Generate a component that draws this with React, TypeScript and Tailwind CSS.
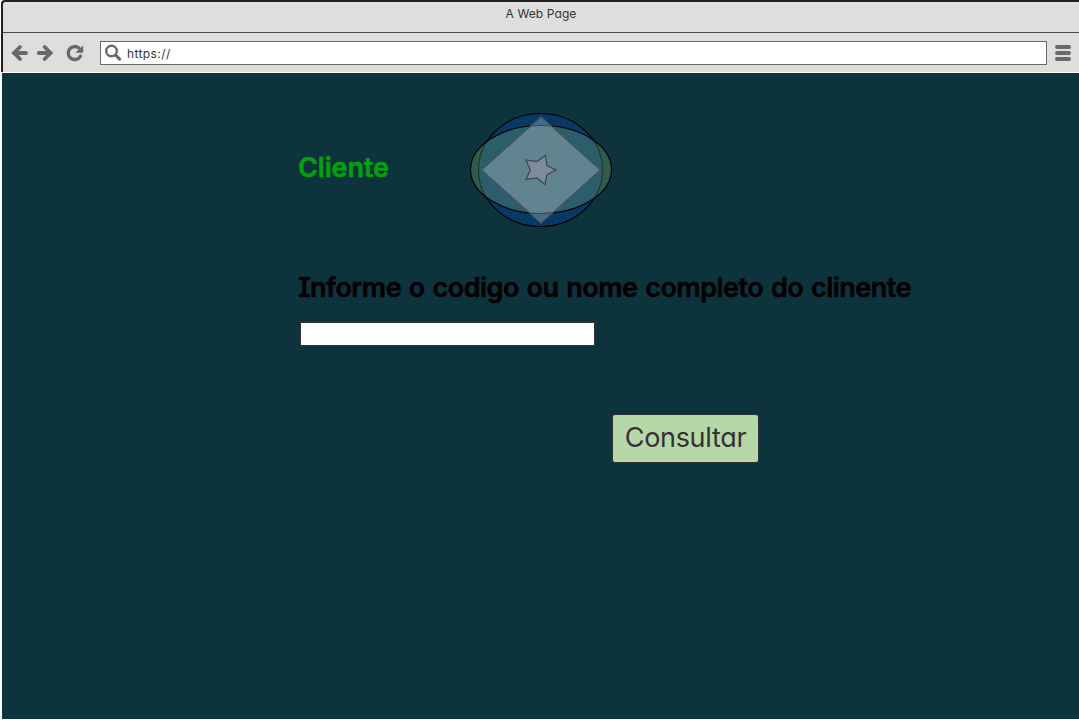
import React from "react";

function BackIcon() {
  return (
    <svg className="h-5 w-5" viewBox="0 0 20 20" fill="none" stroke="#696969" strokeWidth="3.8" strokeLinecap="round" strokeLinejoin="miter">
      <path d="M16 10H5" />
      <path d="M10 4L4 10L10 16" />
    </svg>
  );
}

function ForwardIcon() {
  return (
    <svg className="h-5 w-5" viewBox="0 0 20 20" fill="none" stroke="#696969" strokeWidth="3.8" strokeLinecap="round">
      <path d="M3.8 10H14.8" />
      <path d="M9.6 4L15.6 10L9.6 16" />
    </svg>
  );
}

function ReloadIcon() {
  return (
    <svg className="h-5 w-5" viewBox="0 0 20 20">
      <path d="M15.4 13.2A6.5 6.5 0 1 1 13.8 5" fill="none" stroke="#696969" strokeWidth="3.4" strokeLinecap="round" />
      <path d="M18.2 2.2V9.8H10.4Z" fill="#696969" />
    </svg>
  );
}

function SearchIcon() {
  return (
    <svg className="h-5 w-5 shrink-0" viewBox="0 0 20 20" fill="none" stroke="#696969" strokeLinecap="round">
      <circle cx="7.5" cy="8" r="5.3" strokeWidth="2.4" />
      <path d="M11.8 12.4L15.6 16.1" strokeWidth="3.2" />
    </svg>
  );
}

function Logo() {
  return (
    <svg className="h-[116px] w-[144px]" viewBox="469 112 144 116" strokeWidth="1.2">
      <ellipse cx="540.5" cy="170" rx="62" ry="56.5" fill="#083864" stroke="#000" />
      <ellipse cx="541" cy="169.5" rx="70.5" ry="44" fill="#7eb67b" fillOpacity="0.3" stroke="#000" />
      <path d="M481.6 170L541 116.8L600.4 170L541 223.2Z" fill="#dbe2e8" fillOpacity="0.3" stroke="#4a5358" />
      <path d="M526 160L537 161.5L545.5 155.3L546.8 165.5L556 170L546.8 175L545 184.7L537 178L526 179.5L530.3 170Z" fill="#7d8c9c" stroke="#3f4449" />
    </svg>
  );
}

export default function App() {
  return (
    <div className="flex h-[720px] w-[1079px] flex-col overflow-hidden bg-white pl-px font-['Inter','Noto_Sans',sans-serif] [font-feature-settings:'cv11','cv08']">
      <header className="flex h-[72px] shrink-0 flex-col rounded-tl-[4px] border-t-2 border-l-2 border-[#231f20] bg-[#dededd]">
        <div className="flex h-[31px] items-start justify-center border-b border-[#4a4a4a] pt-[3px] text-[12px] leading-[18px] text-[#333]">
          <span className="tracking-[0.1px]">A Web Page</span>
        </div>
        <div className="flex flex-1 items-center pl-[7px] pt-[1px]">
          <BackIcon />
          <div className="ml-[5px]"><ForwardIcon /></div>
          <div className="ml-[10px]"><ReloadIcon /></div>
          <div className="ml-[15px] flex h-[24px] w-[947px] items-center border border-[#696969] bg-white pl-[3px] text-[12px] text-[#333]">
            <SearchIcon />
            <span className="ml-[3px] pt-px tracking-[0.4px]">https://</span>
          </div>
          <div className="ml-[8px] flex w-4 flex-col gap-[2px]">
            <i className="h-1 rounded-full bg-[#696969]" />
            <i className="h-1 rounded-full bg-[#696969]" />
            <i className="h-1 rounded-full bg-[#696969]" />
          </div>
        </div>
      </header>
      <main className="mt-px mb-px ml-px flex flex-1 flex-col items-start bg-[#0d343c] pl-[296px] pt-[39px]">
        <div className="flex h-[116px] items-start">
          <h1 className="w-[171px] pt-[39px] text-[27px] leading-[34px] font-semibold tracking-[-0.15px] text-[#03a00f] [-webkit-text-stroke:0.5px_#03a00f]">
            Cliente
          </h1>
          <Logo />
        </div>
        <label className="mt-[43px] text-[27px] leading-[34px] font-semibold tracking-[-0.5px] whitespace-nowrap text-black [word-spacing:1.4px] [-webkit-text-stroke:0.5px_#000]">
          Informe o codigo ou nome completo do clinente
        </label>
        <input className="mt-[17px] ml-[2px] h-[24px] w-[295px] border border-[#333] bg-white px-1 text-sm outline-none" />
        <button className="mt-[68px] ml-[314px] flex h-[49px] w-[147px] items-center justify-center rounded-[3px] border border-[#333] bg-[#b6d7a8] pb-px text-[27px] tracking-[-0.3px] text-[#333]">
          <span>Consultar</span>
        </button>
      </main>
    </div>
  );
}
